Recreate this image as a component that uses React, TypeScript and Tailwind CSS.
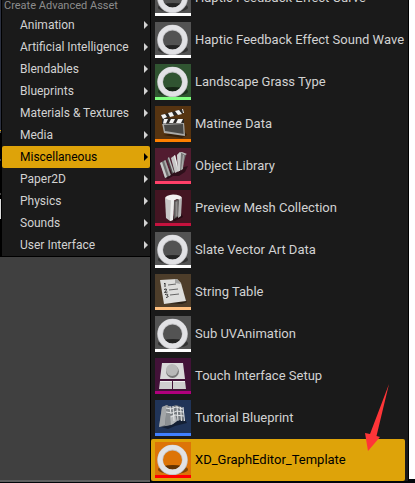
import type { ReactNode } from "react";

const categories = [
  "Animation",
  "Artificial Intelligence",
  "Blendables",
  "Blueprints",
  "Materials & Textures",
  "Media",
  "Miscellaneous",
  "Paper2D",
  "Physics",
  "Sounds",
  "User Interface",
];

function Ring() {
  return (
    <>
      <ellipse cx="18" cy="27.500" rx="15" ry="4.500" fill="#000" opacity="0.4" />
      <ellipse cx="18" cy="25" rx="8" ry="2" fill="#000" opacity="0.25" />
      <circle cx="17.500" cy="18" r="12.400" fill="none" stroke="#c3c3c6" strokeWidth="5.800" />
      <circle cx="17.500" cy="17.600" r="12.400" fill="none" stroke="#e2e2e5" strokeWidth="4.600" />
    </>
  );
}

function Clapper() {
  return (
    <>
      <path d="M8 29l19 3 5-3-3-4z" fill="#000" opacity="0.4" />
      <path d="M7 17l22-1 1 14-21-3z" fill="#a9a9a7" />
      <path d="M9 19l19-1 .6 10L10 25z" fill="#484846" />
      <path d="M7 12l22 1v4l-22 1zM6 9l22-6 1 4L7 13z" fill="#292725" />
      <path d="M6 9l4-1 2 3-4 2zM13 7l4-1 2 4-4 1zM20 5l4-1 3 4-4 1zM27 3l1 0 1 4-1 0zM9 13h4l-2 4.500H8zM16 13h4l-2 4h-4zM23 13h5l-2 4h-5z" fill="#f2f2f2" />
    </>
  );
}

function Books() {
  return (
    <>
      <path d="M8 29l5 2 5-3 6 0 6-4 3-6-20 5z" fill="#000" opacity="0.45" />
      <path d="M5 15l5-3 6 15-6 3z" fill="#6f6f6f" />
      <path d="M5 15l2-1 5 15-2 1z" fill="#c9c9c9" />
      <path d="M9 13l1.500-1 5 15-1.500 1z" fill="#aaa" />
      <path d="M12 11l2-2 6 15-3 2z" fill="#4c4c4c" />
      <path d="M13 10l1-1 5 15-1 1z" fill="#bbb" />
      <path d="M16 10l4-3 4 16-4 2z" fill="#c6c6c6" />
      <path d="M19 8l1-1 4 16-1 .5z" fill="#eee" />
      <path d="M22 7l3-3 6 2-4 16-4 1z" fill="#767676" />
      <path d="M22 7l3-3 1 1-1 18-2 0z" fill="#cfcfcf" />
      <path d="M25 4l2 0 5 2-2 1z" fill="#bbb" />
      <path d="M28 7l1 0-1 14-2 1z" fill="#aaa" />
    </>
  );
}

function MeshColumn() {
  return (
    <>
      <path d="M12 29l8 2 8-4-2-4z" fill="#000" opacity="0.45" />
      <path d="M10 8l9 2-1 20-3 1-4-3z" fill="#c8c7c7" />
      <path d="M16 10l3 0-1 20-3 1z" fill="#ececec" />
      <path d="M19 11l5-2 0 17-5 3z" fill="#5a5757" />
      <path d="M20.500 12l2-1 0 15-2 1z" fill="#8f8c8c" />
      <path d="M24 9l3-1-1 18-3 2z" fill="#b5b4b4" />
      <path d="M10 8q1-3 8-3.500 8 0 9 3.500l-3 1.500-2-.5-3 1.500q-6 0-9-2.500z" fill="#f1f1f1" />
    </>
  );
}

function NumberedPage() {
  return (
    <>
      <path d="M9 29l18 1 5-2-4-5z" fill="#000" opacity="0.45" />
      <path d="M5 6l17-1 4 4 5 18-22 3z" fill="#dededc" />
      <path d="M20 5v4l6 1-4-5z" fill="#a5a5a3" />
      <path d="M9 10l1-1v4M9 15.500q3-1.500 2.500.5l-2 2.500 3-.5M10 20.500q4-1 2 1 3 1-1 2" fill="none" stroke="#333" />
      <path d="M13 11l8-1M14 16l9-1M15 21l9-1" stroke="#666" strokeWidth="1" />
    </>
  );
}

function TouchPad() {
  return (
    <>
      <path d="M7 5h21l2 16H5z" fill="#d9d9d9" />
      <path d="M5 23h12v8H4zM18 23h12l1 8H18z" fill="#cfcfcf" />
      <path d="M5 23h12v1H5zM18 23h12v1H18z" fill="#eee" />
      <circle cx="17.500" cy="13.500" r="6.400" fill="#777" />
      <circle cx="17" cy="12" r="6" fill="#b8b8b8" />
    </>
  );
}

function BlueprintMap() {
  return (
    <>
      <path d="M6 27l7 2 7-3 12-3-3-5z" fill="#000" opacity="0.4" />
      <path d="M7 7l5-2 3 2 6-2 6 2 2 14-6-1-5 4-7 2-7 1z" fill="#74797e" />
      <path d="M7 7l5-2-2 20-6 2z" fill="#a3a6a8" />
      <path d="M12 5l3 2 1 18-6 1z" fill="#8b8f92" />
      <path d="M15 16l5-2 2 7-4 3-2 1z" fill="#b5b8ba" />
      <path d="M11 8l5 1 5-2 7 2M11 12l6 1 5-2 6 1M16 17l4-2 9 1M15 6l1 8M18 6l1 15M22 6l1 15M25.500 7l1 14M28 7l1.500 14" fill="none" stroke="#e3e5e6" />
    </>
  );
}

type Asset = { name: string; tile: string; bar: string; art: ReactNode; selected?: boolean };

const assets: Asset[] = [
  { name: "Haptic Feedback Effect Curve", tile: "#535353", bar: "#ffffff", art: <Ring /> },
  { name: "Haptic Feedback Effect Sound Wave", tile: "#535353", bar: "#ffffff", art: <Ring /> },
  { name: "Landscape Grass Type", tile: "#305431", bar: "#80ff80", art: <Ring /> },
  { name: "Matinee Data", tile: "#563411", bar: "#ff8000", art: <Clapper /> },
  { name: "Object Library", tile: "#521c30", bar: "#ff4068", art: <Books /> },
  { name: "Preview Mesh Collection", tile: "#431522", bar: "#c6123e", art: <MeshColumn /> },
  { name: "Slate Vector Art Data", tile: "#535353", bar: "#ffffff", art: <Ring /> },
  { name: "String Table", tile: "#4d3d2a", bar: "#ffc080", art: <NumberedPage /> },
  { name: "Sub UVAnimation", tile: "#535353", bar: "#ffffff", art: <Ring /> },
  { name: "Touch Interface Setup", tile: "#421238", bar: "#b0007c", art: <TouchPad /> },
  { name: "Tutorial Blueprint", tile: "#203458", bar: "#4080ff", art: <BlueprintMap /> },
  { name: "XD_GraphEditor_Template", tile: "#dd7408", bar: "#ff0000", art: <Ring />, selected: true },
];

function AssetIcon({ tile, bar, art }: Asset) {
  return (
    <svg viewBox="0 0 36 36" className="size-9 shrink-0" aria-hidden="true">
      <rect width="36" height="36" fill={tile} />
      {art}
      <rect y="33" width="36" height="3" fill={bar} />
    </svg>
  );
}

function WindowEdge() {
  return (
    <div className="flex w-px shrink-0 flex-col bg-black">
      <div className="h-[130px] bg-[#2b3040]" />
      <div className="h-px bg-[#dea309]" />
      <div className="h-0.5 bg-[#555555]" />
      <div className="mt-[26px] h-0.5 bg-[#444444]" />
      <div className="mt-8 h-0.5 bg-[#444444]" />
      <div className="mt-1 h-5 bg-[#dddddd]" />
    </div>
  );
}

export default function App() {
  return (
    <main className="relative flex h-screen overflow-hidden bg-[#02060a] font-['Roboto',sans-serif] text-[13px] text-[#d2d2d2]">
      <div className="mb-px w-[150px] shrink-0 border-b-2 border-[#606060] bg-[#404040]">
        <div className="flex">
          <WindowEdge />
          <nav aria-label="Create Advanced Asset" className="min-w-0 grow border-b border-l border-black bg-[#1a1a1a]">
            <h2 className="h-[14px] pl-0.5 text-[11px] leading-[12px] text-[#8c8c8c]">Create Advanced Asset</h2>
            {categories.map((name) => {
              const active = name === "Miscellaneous";
              return (
                <button
                  key={name}
                  type="button"
                  aria-haspopup="menu"
                  className={`flex h-[22px] w-full items-center justify-between rounded-xs pr-0.5 pl-[18px] text-left text-xs whitespace-nowrap ${active ? "bg-[#dea309] text-black" : ""}`}
                >
                  {name}
                  <svg viewBox="0 0 4 8" className="h-2 w-1" aria-hidden="true">
                    <path d="M0 0L4 4L0 8Z" fill="currentColor" />
                  </svg>
                </button>
              );
            })}
          </nav>
        </div>
      </div>
      <section aria-label="Miscellaneous" className="min-w-0 grow">
        <div className="-mt-[23px] border-r border-l border-black bg-[#1a1a1a] pr-[3px]">
          {assets.map((asset) => (
            <button
              key={asset.name}
              type="button"
              className={`flex h-[42px] w-full items-center gap-1 rounded-xs pl-1 text-left whitespace-nowrap ${asset.selected ? "bg-[#dea309] text-black" : ""}`}
            >
              <AssetIcon {...asset} />
              {asset.name}
            </button>
          ))}
        </div>
      </section>
      <div className="mb-1 w-1.5 shrink-0 bg-white" />
      <svg viewBox="0 0 26 68" className="absolute top-[384px] left-[364px] h-[68px] w-[26px]" aria-hidden="true">
        <path d="M25 0L12.500 52L16 53L4 67L1 49L6 50Z" fill="#ff3538" />
      </svg>
    </main>
  );
}
